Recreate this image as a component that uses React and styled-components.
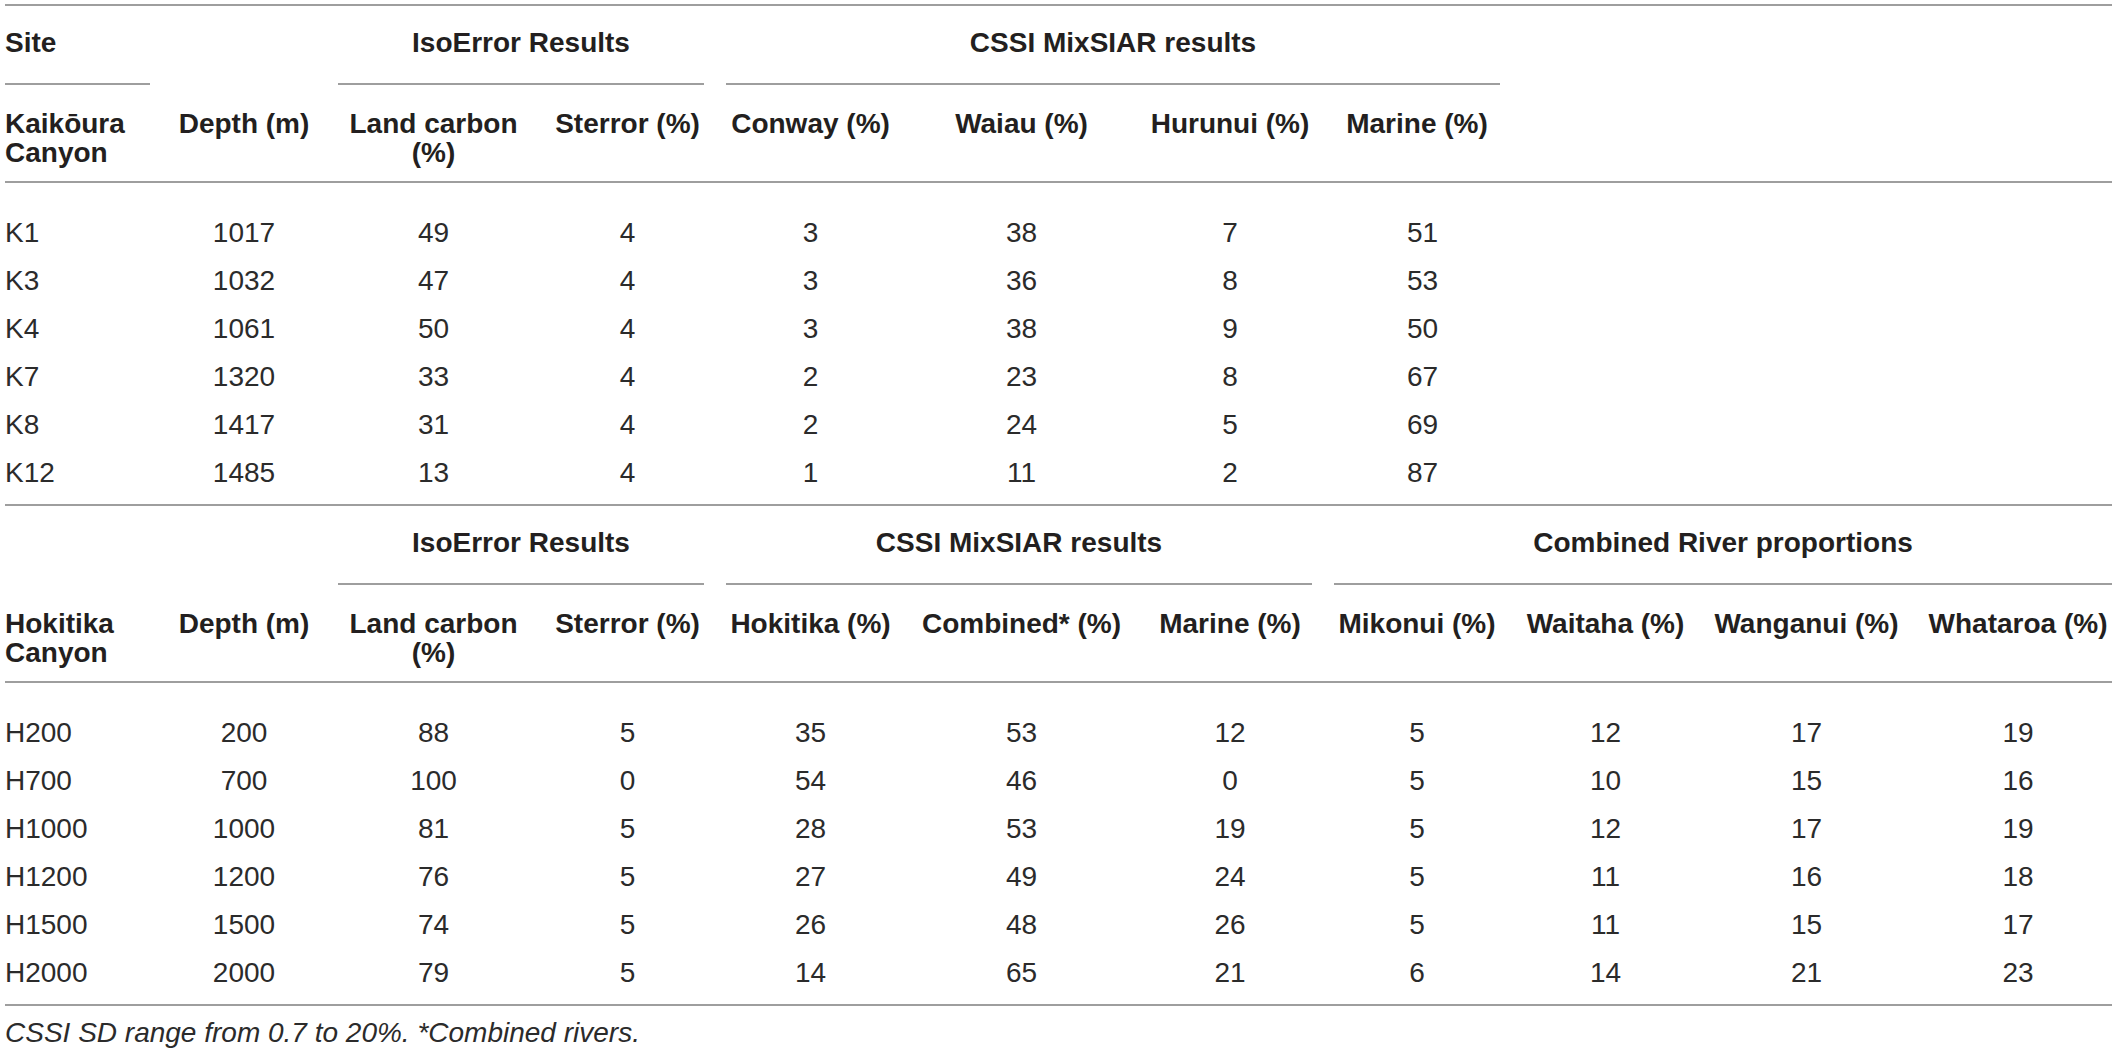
import React from "react";
import styled, { createGlobalStyle } from "styled-components";

const GlobalStyle = createGlobalStyle`
  body {
    margin: 0;
    background: #fff;
    color: #231f20;
    font-family: "Liberation Sans", Arial, sans-serif;
  }
`;

const RULE = "2px solid #9e9e9e";

const Wrapper = styled.div`
  padding: 4px 5px 0 5px;
`;

const Table = styled.table`
  width: 2107px;
  table-layout: fixed;
  border-collapse: collapse;
  font-size: 28px;
  line-height: 36px;
`;

const Col = styled.col`
  width: ${(p) => p.$w}px;
`;

const GroupRow = styled.tr`
  td {
    border-top: ${RULE};
    padding: 19px 11px 0;
    vertical-align: top;
  }
  td:first-child {
    padding-left: 0;
  }
  td:last-child {
    padding-right: 0;
  }
`;

const GroupLabel = styled.div`
  font-weight: 700;
  text-align: ${(p) => p.$align || "center"};
  padding-bottom: 22px;
  border-bottom: ${RULE};
  white-space: nowrap;
`;

const HeadRow = styled.tr`
  td {
    padding: 24px 11px 14px;
    line-height: 29px;
    vertical-align: top;
    text-align: center;
    font-weight: 700;
    border-bottom: ${RULE};
  }
  td:first-child {
    text-align: left;
    padding-left: 0;
  }
  td:last-child {
    padding-right: 0;
  }
`;

const DataRow = styled.tr`
  td {
    padding: ${(p) => (p.$first ? 32 : 6)}px 11px ${(p) => (p.$last ? 13 : 6)}px;
    text-align: center;
    white-space: nowrap;
    color: #2b2b2b;
    border-bottom: ${(p) => (p.$rule ? RULE : "none")};
  }
  td:first-child {
    text-align: left;
    padding-left: 0;
  }
  td:last-child {
    padding-right: 0;
  }
`;

const Footnote = styled.p`
  margin: 9px 0 0;
  font-size: 28px;
  line-height: 36px;
  font-style: italic;
  color: #2b2b2b;
`;

const widths = [156, 166, 213, 175, 191, 231, 186, 188, 189, 213, 199];

const sections = [
  {
    group: [
      { label: "Site", span: 1, align: "left" },
      { span: 1 },
      { label: "IsoError Results", span: 2 },
      { label: "CSSI MixSIAR results", span: 4 },
      { span: 3 },
    ],
    heads: [
      "Kaikōura Canyon",
      "Depth (m)",
      "Land carbon (%)",
      "Sterror (%)",
      "Conway (%)",
      "Waiau (%)",
      "Hurunui (%)",
      "Marine (%)",
      "",
      "",
      "",
    ],
    rows: [
      ["K1", "1017", "49", "4", "3", "38", "7", "51"],
      ["K3", "1032", "47", "4", "3", "36", "8", "53"],
      ["K4", "1061", "50", "4", "3", "38", "9", "50"],
      ["K7", "1320", "33", "4", "2", "23", "8", "67"],
      ["K8", "1417", "31", "4", "2", "24", "5", "69"],
      ["K12", "1485", "13", "4", "1", "11", "2", "87"],
    ],
  },
  {
    group: [
      { span: 1 },
      { span: 1 },
      { label: "IsoError Results", span: 2 },
      { label: "CSSI MixSIAR results", span: 3 },
      { label: "Combined River proportions", span: 4 },
    ],
    heads: [
      "Hokitika Canyon",
      "Depth (m)",
      "Land carbon (%)",
      "Sterror (%)",
      "Hokitika (%)",
      "Combined* (%)",
      "Marine (%)",
      "Mikonui (%)",
      "Waitaha (%)",
      "Wanganui (%)",
      "Whataroa (%)",
    ],
    rows: [
      ["H200", "200", "88", "5", "35", "53", "12", "5", "12", "17", "19"],
      ["H700", "700", "100", "0", "54", "46", "0", "5", "10", "15", "16"],
      ["H1000", "1000", "81", "5", "28", "53", "19", "5", "12", "17", "19"],
      ["H1200", "1200", "76", "5", "27", "49", "24", "5", "11", "16", "18"],
      ["H1500", "1500", "74", "5", "26", "48", "26", "5", "11", "15", "17"],
      ["H2000", "2000", "79", "5", "14", "65", "21", "6", "14", "21", "23"],
    ],
  },
];

export default function App() {
  return (
    <>
      <GlobalStyle />
      <Wrapper>
        <Table>
          <colgroup>
            {widths.map((w, i) => (
              <Col key={i} $w={w} />
            ))}
          </colgroup>
          {sections.map((s, si) => (
            <tbody key={si}>
              <GroupRow>
                {s.group.map((g, gi) => (
                  <td key={gi} colSpan={g.span}>
                    {g.label && <GroupLabel $align={g.align}>{g.label}</GroupLabel>}
                  </td>
                ))}
              </GroupRow>
              <HeadRow>
                {s.heads.map((h, hi) => (
                  <td key={hi}>{h}</td>
                ))}
              </HeadRow>
              {s.rows.map((r, ri) => (
                <DataRow
                  key={ri}
                  $first={ri === 0}
                  $last={ri === s.rows.length - 1}
                  $rule={si === sections.length - 1 && ri === s.rows.length - 1}
                >
                  {r.map((c, ci) => (
                    <td key={ci}>{c}</td>
                  ))}
                </DataRow>
              ))}
            </tbody>
          ))}
        </Table>
        <Footnote>CSSI SD range from 0.7 to 20%. *Combined rivers.</Footnote>
      </Wrapper>
    </>
  );
}
